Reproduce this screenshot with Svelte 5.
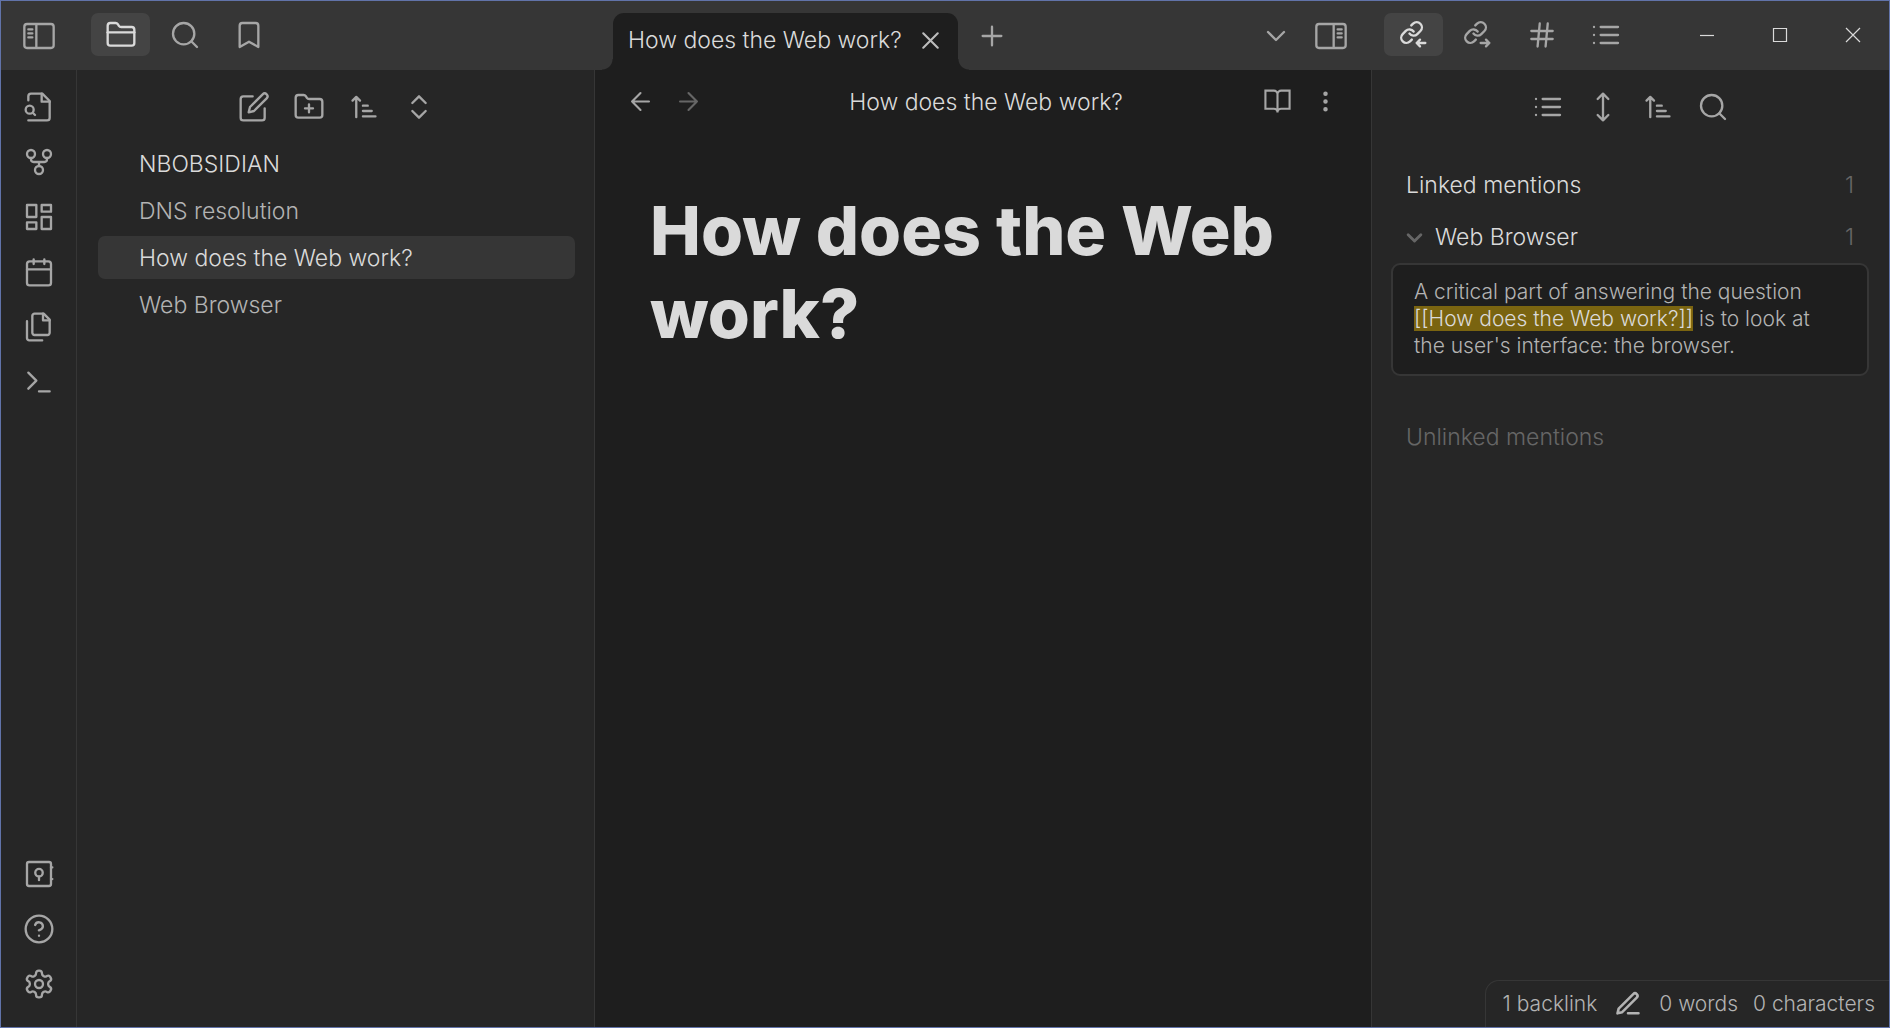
<script>
  const link =
    '<g transform="translate(.8 .8) scale(.78)" stroke-width="2.3"><path d="M10 13a5 5 0 0 0 7.54.54l3-3a5 5 0 0 0-7.07-7.07l-1.72 1.71"/><path d="M14 11a5 5 0 0 0-7.54-.54l-3 3a5 5 0 0 0 7.07 7.07l1.71-1.71"/></g>';

  const icons = {
    sidebarLeft:
      '<rect x="1" y="3" width="22" height="18" rx="2"/><path d="M10 4v16M4 7h3M4 10h3M4 13h3"/>',
    sidebarRight:
      '<rect x="1" y="3" width="22" height="18" rx="2"/><path d="M14 4v16M17 7h3M17 10h3M17 13h3"/>',
    folder:
      '<path d="M20 20a2 2 0 0 0 2-2V8a2 2 0 0 0-2-2h-7.9a2 2 0 0 1-1.69-.9L9.6 3.9A2 2 0 0 0 7.93 3H4a2 2 0 0 0-2 2v13a2 2 0 0 0 2 2Z"/><path d="M2 10h20"/>',
    search: '<circle cx="11" cy="11" r="8"/><path d="m21 21-4.3-4.3"/>',
    bookmark: '<path d="m19 21-7-4-7 4V5a2 2 0 0 1 2-2h10a2 2 0 0 1 2 2v16z"/>',
    close: '<path d="M18 6 6 18M6 6l12 12"/>',
    plus: '<path d="M5 12h14M12 5v14"/>',
    chevronDown: '<path d="m6 9 6 6 6-6"/>',
    linksIn: link + '<path d="M14 18h6.5M16.5 15.5 14 18l2.5 2.5"/>',
    linksOut: link + '<path d="M14 18h6.5M18 15.5l2.5 2.5-2.5 2.5"/>',
    hash: '<path d="M4 9h16M4 15h16M10.3 3.4 8.7 20.6M16.3 3.4l-1.6 17.2"/>',
    list: '<path d="M8 6h13M8 12h13M8 18h13M3 6h.01M3 12h.01M3 18h.01"/>',
    fileSearch:
      '<path d="M4 22h14a2 2 0 0 0 2-2V7.5L14.5 2H6a2 2 0 0 0-2 2v3"/><path d="M14 2v6h6"/><path d="M5 17a3 3 0 1 0 0-6 3 3 0 0 0 0 6z"/><path d="m9 18-1.5-1.5"/>',
    graph:
      '<circle cx="12" cy="18" r="3"/><circle cx="6" cy="6" r="3"/><circle cx="18" cy="6" r="3"/><path d="M18 9v1a2 2 0 0 1-2 2H8a2 2 0 0 1-2-2V9M12 12v3"/>',
    canvas:
      '<rect x="3" y="3" width="7" height="9"/><rect x="14" y="3" width="7" height="5"/><rect x="14" y="12" width="7" height="9"/><rect x="3" y="16" width="7" height="5"/>',
    calendar:
      '<rect x="3" y="4" width="18" height="18" rx="2"/><path d="M16 2.5V6M8 2.5V6M3 10h18"/>',
    files:
      '<path d="M15.5 2H8.6c-.4 0-.8.2-1.1.5-.3.3-.5.7-.5 1.1v12.8c0 .4.2.8.5 1.1.3.3.7.5 1.1.5h9.8c.4 0 .8-.2 1.1-.5.3-.3.5-.7.5-1.1V6.5L15.5 2z"/><path d="M3 7.6v12.8c0 .4.2.8.5 1.1.3.3.7.5 1.1.5h9.8M15 2v5h5"/>',
    terminal: '<path d="m4 17 6-6-6-6M12 19h8"/>',
    vault:
      '<rect x="3" y="3" width="18" height="18" rx="1.5"/><circle cx="12" cy="11" r="2.8"/><path d="M12 14v2.6M21 7h1M21 15.8h1"/>',
    help: '<circle cx="12" cy="12" r="10"/><path d="M9.09 9a3 3 0 0 1 5.83 1c0 2-3 3-3 3M12 17h.01"/>',
    settings:
      '<path d="M12.22 2h-.44a2 2 0 0 0-2 2v.18a2 2 0 0 1-1 1.73l-.43.25a2 2 0 0 1-2 0l-.15-.08a2 2 0 0 0-2.73.73l-.22.38a2 2 0 0 0 .73 2.73l.15.1a2 2 0 0 1 1 1.72v.51a2 2 0 0 1-1 1.74l-.15.09a2 2 0 0 0-.73 2.73l.22.38a2 2 0 0 0 2.73.73l.15-.08a2 2 0 0 1 2 0l.43.25a2 2 0 0 1 1 1.73V20a2 2 0 0 0 2 2h.44a2 2 0 0 0 2-2v-.18a2 2 0 0 1 1-1.73l.43-.25a2 2 0 0 1 2 0l.15.08a2 2 0 0 0 2.73-.73l.22-.39a2 2 0 0 0-.73-2.73l-.15-.08a2 2 0 0 1-1-1.74v-.5a2 2 0 0 1 1-1.74l.15-.09a2 2 0 0 0 .73-2.73l-.22-.38a2 2 0 0 0-2.73-.73l-.15.08a2 2 0 0 1-2 0l-.43-.25a2 2 0 0 1-1-1.73V4a2 2 0 0 0-2-2z"/><circle cx="12" cy="12" r="3"/>',
    edit: '<path d="M11 4H4a2 2 0 0 0-2 2v14a2 2 0 0 0 2 2h14a2 2 0 0 0 2-2v-7"/><path d="M18.5 2.5a2.12 2.12 0 0 1 3 3L12 15l-4 1 1-4Z"/>',
    folderPlus:
      '<path d="M20 20a2 2 0 0 0 2-2V8a2 2 0 0 0-2-2h-7.9a2 2 0 0 1-1.69-.9L9.6 3.9A2 2 0 0 0 7.93 3H4a2 2 0 0 0-2 2v13a2 2 0 0 0 2 2Z"/><path d="M12 10v6M9 13h6"/>',
    sort: '<path d="M3.4 7.2 6.2 4.4 9 7.2M6.2 4.4v15.2M11.2 11h3.6M11.2 15h6.6M11.2 19h9.4"/>',
    collapse: '<path d="m7 15 5 5 5-5M7 9l5-5 5 5"/>',
    expand: '<path d="m8 18 4 4 4-4M8 6l4-4 4 4M12 2v20"/>',
    back: '<path d="m12 19-7-7 7-7M19 12H5"/>',
    forward: '<path d="M5 12h14M12 5l7 7-7 7"/>',
    book: '<path stroke-linejoin="miter" d="M2 3h7a3 3 0 0 1 3 3v15a3 3 0 0 0-3-3H2zM22 3h-7a3 3 0 0 0-3 3v15a3 3 0 0 1 3-3h7z"/>',
    more: '<circle cx="12" cy="5.5" r="1"/><circle cx="12" cy="12" r="1"/><circle cx="12" cy="18.5" r="1"/>',
    pen: '<path stroke-width="2.2" d="M12 20h9M16.5 3.5a2.12 2.12 0 0 1 3 3L7 19l-4 1 1-4Z"/>',
    fold: '<path stroke-width="4" d="m3 8 9 9 9-9"/>'
  };

  const noteTitle = 'How does the Web work?';

  const leftTabs = [
    ['folder', 'Files'],
    ['search', 'Search'],
    ['bookmark', 'Bookmarks']
  ];
  const rightTabs = [
    ['linksIn', 'Backlinks'],
    ['linksOut', 'Outgoing links'],
    ['hash', 'Tags'],
    ['list', 'Outline']
  ];
  const ribbonTop = [
    ['fileSearch', 'Open quick switcher'],
    ['graph', 'Open graph view'],
    ['canvas', 'Create new canvas'],
    ['calendar', "Open today's daily note"],
    ['files', 'Insert template'],
    ['terminal', 'Open command palette']
  ];
  const ribbonBottom = [
    ['vault', 'Open another vault'],
    ['help', 'Help'],
    ['settings', 'Settings']
  ];
  const fileTools = [
    ['edit', 'New note'],
    ['folderPlus', 'New folder'],
    ['sort', 'Change sort order'],
    ['collapse', 'Expand all']
  ];
  const linkTools = [
    ['list', 'Collapse results'],
    ['expand', 'Show more context'],
    ['sort', 'Change sort order'],
    ['search', 'Show search filter']
  ];
  const notes = ['DNS resolution', noteTitle, 'Web Browser'];

  let activeNote = $state(noteTitle);
  let activeLeft = $state('folder');
  let activeRight = $state('linksIn');
</script>

{#snippet icon(name, size = '')}
  <svg class="icon {size}" viewBox="0 0 24 24" aria-hidden="true">{@html icons[name]}</svg>
{/snippet}

{#snippet tool([name, label])}
  <button class="tool" aria-label={label}>{@render icon(name)}</button>
{/snippet}

<div class="window">
  <header class="titlebar">
    <div class="corner">{@render tool(['sidebarLeft', 'Toggle left sidebar'])}</div>
    <div class="side-tabs left">
      {#each leftTabs as [name, label]}
        <button
          class="side-tab"
          class:active={activeLeft === name}
          aria-label={label}
          onclick={() => (activeLeft = name)}>{@render icon(name)}</button>
      {/each}
    </div>
    <div class="note-tabs">
      <div class="note-tab">
        <span class="note-tab-title">{noteTitle}</span>
        <button class="tab-close" aria-label="Close tab">{@render icon('close', 'small')}</button>
      </div>
      <button class="tool" aria-label="New tab">{@render icon('plus')}</button>
      <div class="spacer"></div>
      <button class="tool" aria-label="Tab list">{@render icon('chevronDown')}</button>
      {@render tool(['sidebarRight', 'Toggle right sidebar'])}
    </div>
    <div class="side-tabs right">
      {#each rightTabs as [name, label]}
        <button
          class="side-tab"
          class:active={activeRight === name}
          aria-label={label}
          onclick={() => (activeRight = name)}>{@render icon(name)}</button>
      {/each}
      <div class="window-controls">
        <button aria-label="Minimize"><svg viewBox="0 0 16 16" aria-hidden="true"><path d="M1 8.5h14" /></svg></button>
        <button aria-label="Maximize"><svg viewBox="0 0 16 16" aria-hidden="true"><path d="M1.5 1.5h13v13h-13z" /></svg></button>
        <button aria-label="Close"><svg viewBox="0 0 16 16" aria-hidden="true"><path d="m1 1 14 14M15 1 1 15" /></svg></button>
      </div>
    </div>
  </header>

  <div class="workspace">
    <nav class="ribbon" aria-label="Ribbon">
      {#each ribbonTop as item}{@render tool(item)}{/each}
      <div class="spacer"></div>
      {#each ribbonBottom as item}{@render tool(item)}{/each}
    </nav>

    <aside class="files">
      <div class="toolbar">
        {#each fileTools as item}{@render tool(item)}{/each}
      </div>
      <div class="vault-name">NBOBSIDIAN</div>
      <ul class="tree">
        {#each notes as note}
          <li>
            <button class="note" class:active={activeNote === note} onclick={() => (activeNote = note)}>{note}</button>
          </li>
        {/each}
      </ul>
    </aside>

    <main class="editor">
      <div class="view-header">
        <div class="view-nav">
          <button class="view-btn" aria-label="Navigate back">{@render icon('back', 'small')}</button>
          <button class="view-btn" aria-label="Navigate forward" disabled>{@render icon('forward', 'small')}</button>
        </div>
        <div class="view-title">{noteTitle}</div>
        <div class="view-nav end">
          <button class="view-btn" aria-label="Reading view">{@render icon('book', 'small')}</button>
          <button class="view-btn" aria-label="More options">{@render icon('more', 'small')}</button>
        </div>
      </div>
      <h1>{noteTitle}</h1>
    </main>

    <aside class="backlinks">
      <div class="toolbar">
        {#each linkTools as item}{@render tool(item)}{/each}
      </div>
      <section class="mentions">
        <h2 class="row"><span>Linked mentions</span><span class="count">1</span></h2>
        <button class="row source">
          {@render icon('fold', 'tiny')}<span>Web Browser</span><span class="count">1</span>
        </button>
        <p class="excerpt">
          A critical part of answering the question <mark>[[How does the Web work?]]</mark> is to look at the user's
          interface: the browser.
        </p>
        <h2 class="row unlinked">Unlinked mentions</h2>
      </section>
      <footer class="status">
        <span>1 backlink</span>
        <button class="status-mode" aria-label="Editing mode">{@render icon('pen', 'mode')}</button>
        <span>0 words</span>
        <span class="chars">0 characters</span>
      </footer>
    </aside>
  </div>
</div>

<style>
  :global(body) {
    margin: 0;
    background: #1e1e1e;
  }

  .window {
    box-sizing: border-box;
    min-height: 100vh;
    display: flex;
    flex-direction: column;
    border: 1px solid #6173a9;
    background: #1e1e1e;
    color: #dadada;
    font-family: Inter, "Liberation Sans", sans-serif;
    font-size: 23px;
    font-weight: 340;
    line-height: 31px;
  }

  button {
    margin: 0;
    padding: 0;
    border: 0;
    background: none;
    color: inherit;
    font: inherit;
    text-align: left;
  }

  .icon {
    display: block;
    width: 32px;
    height: 32px;
    fill: none;
    stroke: currentColor;
    stroke-width: 1.75;
    stroke-linecap: round;
    stroke-linejoin: round;
  }

  .icon.small {
    width: 29px;
    height: 29px;
  }

  .icon.mode {
    width: 28px;
    height: 28px;
  }

  .icon.tiny {
    width: 17px;
    height: 17px;
  }

  .spacer {
    flex: 1;
  }

  .tool,
  .side-tab {
    display: flex;
    align-items: center;
    justify-content: center;
    flex: none;
    color: #a6a6a6;
  }

  .tool {
    width: 55px;
    height: 43px;
  }

  .titlebar {
    display: flex;
    height: 69px;
    background: #363636;
  }

  .corner {
    display: flex;
    align-items: center;
    justify-content: center;
    width: 76px;
  }

  .side-tabs {
    box-sizing: border-box;
    display: flex;
    gap: 5px;
    width: 518px;
    padding: 12px 0 14px 14px;
  }

  .side-tabs.right {
    padding-left: 13px;
  }

  .side-tab {
    width: 59px;
    height: 43px;
    border-radius: 7px;
  }

  .side-tab.active {
    background: #444;
    color: #dadada;
  }

  .note-tabs {
    display: flex;
    flex: 1;
    align-items: center;
    padding: 0 13px 0 18px;
  }

  .note-tab {
    position: relative;
    box-sizing: border-box;
    align-self: flex-end;
    display: flex;
    align-items: center;
    justify-content: space-between;
    width: 345px;
    height: 57px;
    padding: 0 13px 3px 15px;
    margin-right: 6px;
    border-radius: 11px 11px 0 0;
    background: #1e1e1e;
  }

  .note-tab::before,
  .note-tab::after {
    content: "";
    position: absolute;
    bottom: 0;
    width: 11px;
    height: 11px;
  }

  .note-tab::before {
    right: 100%;
    background: radial-gradient(circle at 0 0, transparent 10px, #1e1e1e 11px);
  }

  .note-tab::after {
    left: 100%;
    background: radial-gradient(circle at 100% 0, transparent 10px, #1e1e1e 11px);
  }

  .tab-close {
    color: #bcbcbc;
  }

  .window-controls {
    display: flex;
    margin-left: auto;
  }

  .window-controls button {
    display: flex;
    align-items: center;
    justify-content: center;
    width: 73px;
  }

  .window-controls svg {
    width: 16px;
    height: 16px;
    fill: none;
    stroke: #dadada;
    stroke-width: 1.2;
  }

  .workspace {
    display: flex;
    flex: 1;
  }

  .ribbon {
    box-sizing: border-box;
    display: flex;
    flex-direction: column;
    align-items: center;
    gap: 12px;
    width: 76px;
    padding: 15px 0 22px;
    border-right: 1px solid #363636;
    background: #262626;
  }

  .files,
  .backlinks {
    box-sizing: border-box;
    display: flex;
    flex-direction: column;
    flex: none;
    width: 518px;
    background: #262626;
  }

  .files {
    border-right: 1px solid #363636;
    padding: 0 19px 0 21px;
  }

  .backlinks {
    border-left: 1px solid #363636;
  }

  .toolbar {
    display: flex;
    justify-content: center;
    padding: 15px 0 14px;
  }

  .vault-name {
    padding: 7px 41px 5px;
    margin-bottom: 4px;
  }

  .tree {
    display: flex;
    flex-direction: column;
    gap: 4px;
    margin: 0;
    padding: 0;
    list-style: none;
  }

  .note {
    width: 100%;
    display: block;
    padding: 7px 41px 5px;
    border-radius: 7px;
    color: #b3b3b3;
  }

  .note.active {
    background: #363636;
    color: #dadada;
  }

  .editor {
    flex: 1;
    min-width: 0;
  }

  .view-header {
    display: flex;
    align-items: center;
    height: 63px;
    padding: 0 22px 0 21px;
  }

  .view-nav {
    display: flex;
    flex: none;
    width: 98px;
  }

  .view-nav.end {
    justify-content: flex-end;
  }

  .view-btn {
    display: flex;
    align-items: center;
    justify-content: center;
    width: 48px;
    height: 43px;
    color: #a6a6a6;
  }

  .view-btn:disabled {
    color: #666;
  }

  .view-title {
    flex: 1;
    padding: 1px 0 0 7px;
    text-align: center;
  }

  h1 {
    margin: 0;
    padding: 56px 55px 0;
    color: #dadada;
    font-size: 68px;
    font-weight: 780;
    line-height: 83px;
  }

  .mentions {
    display: flex;
    flex-direction: column;
    padding: 22px 20px 0 19px;
  }

  .row {
    display: flex;
    align-items: center;
    margin: 0;
    padding: 6px 15px;
    font-size: 23px;
    font-weight: 340;
  }

  .count {
    margin-left: auto;
    color: #666;
  }

  .source {
    gap: 12px;
    margin-top: 9px;
  }

  .source .icon {
    color: #666;
  }

  .excerpt {
    margin: 4px 0 0;
    padding: 13px 21px 15px;
    border: 2px solid #363636;
    border-radius: 9px;
    background: #1e1e1e;
    color: #b3b3b3;
    font-size: 21px;
    line-height: 27px;
  }

  mark {
    background: #7a6410;
    color: #dadada;
  }

  .unlinked {
    margin-top: 40px;
    color: #666;
  }

  .status {
    display: flex;
    align-items: center;
    align-self: flex-end;
    gap: 17px;
    margin-top: auto;
    padding: 7px 14px 8px 17px;
    border: solid #363636;
    border-width: 1px 0 0 1px;
    border-radius: 14px 0 0 0;
    color: #b3b3b3;
    font-size: 21px;
  }

  .status .chars {
    margin-left: -2px;
  }
</style>
